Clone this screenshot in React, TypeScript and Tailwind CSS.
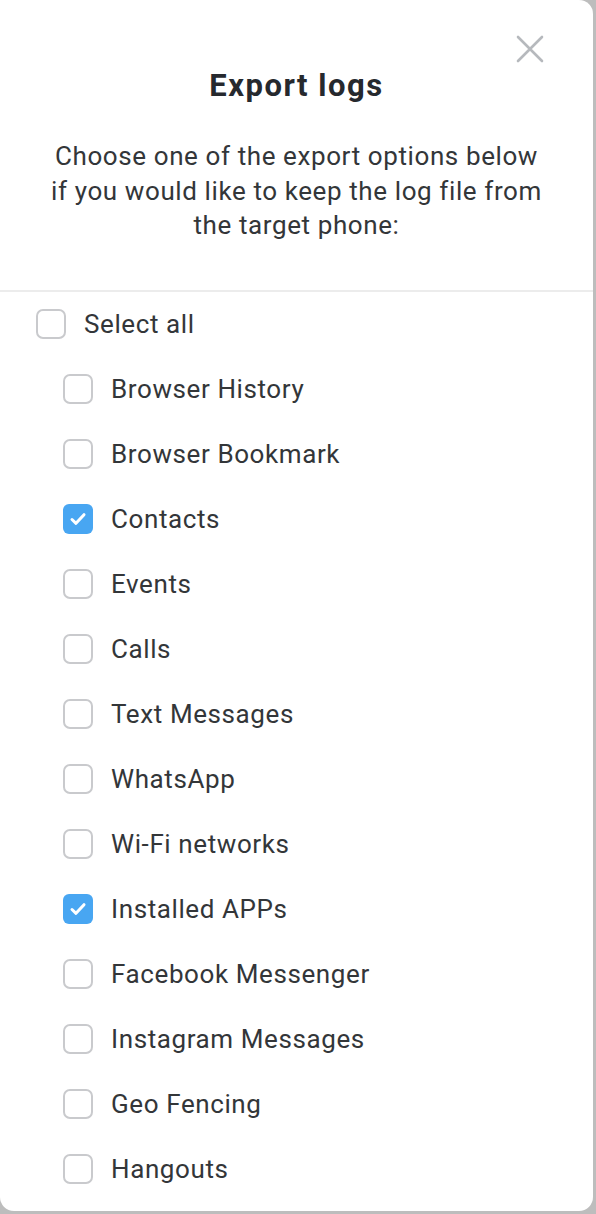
import { useState } from "react";

const items = [
  { label: "Browser History", checked: false },
  { label: "Browser Bookmark", checked: false },
  { label: "Contacts", checked: true },
  { label: "Events", checked: false },
  { label: "Calls", checked: false },
  { label: "Text Messages", checked: false },
  { label: "WhatsApp", checked: false },
  { label: "Wi-Fi networks", checked: false },
  { label: "Installed APPs", checked: true },
  { label: "Facebook Messenger", checked: false },
  { label: "Instagram Messages", checked: false },
  { label: "Geo Fencing", checked: false },
  { label: "Hangouts", checked: false },
];

const Box = ({ checked }: { checked: boolean }) => {
  if (checked) {
    return (
      <span className="flex h-[30px] w-[30px] shrink-0 items-center justify-center rounded-[6px] bg-[#48a6f2]">
        <svg width="20" height="20" viewBox="0 0 20 20" fill="none">
          <path
            d="M4 10.5l4 3.8 8-8.6"
            stroke="white"
            strokeWidth="3"
            strokeLinecap="round"
            strokeLinejoin="round"
          />
        </svg>
      </span>
    );
  }
  return (
    <span className="block h-[30px] w-[30px] shrink-0 rounded-[7px] border-[2.5px] border-[#c9cacd] bg-white" />
  );
};

const Row = ({
  label,
  checked,
  indent,
}: {
  label: string;
  checked: boolean;
  indent?: boolean;
}) => (
  <label
    className={
      "flex h-[65px] items-center gap-[18px] " +
      (indent ? "pl-[63px]" : "pl-[36px]")
    }
  >
    <Box checked={checked} />
    <span className="text-[26px] text-[#333639] tracking-[0.6px]">{label}</span>
  </label>
);

export default function App() {
  const [list] = useState(items);

  return (
    <div
      className="h-[1214px] w-[596px] overflow-hidden bg-[#bdbdbd]"
      style={{ fontFamily: "Roboto, 'Liberation Sans', sans-serif" }}
    >
      <div className="relative h-[1211px] w-[593px] rounded-tr-[14px] rounded-b-[14px] bg-white">
        <button className="absolute right-[49px] top-[35px] text-[#b6b9bd]">
          <svg width="28" height="28" viewBox="0 0 28 28" fill="none">
            <path
              d="M2 2l24 24M26 2L2 26"
              stroke="currentColor"
              strokeWidth="2.6"
              strokeLinecap="round"
            />
          </svg>
        </button>

        <div className="flex flex-col items-center px-6 pt-[68px] pb-[47px] text-center">
          <h1 className="text-[31px] font-bold leading-[36px] tracking-[1.5px] text-[#26292e]">
            Export logs
          </h1>
          <p className="mt-[35px] whitespace-nowrap text-[26px] leading-[34.5px] text-[#333639] tracking-[0.6px]">
            Choose one of the export options below
            <br />
            if you would like to keep the log file from
            <br />
            the target phone:
          </p>
        </div>

        <div className="h-[2px] bg-[#ececec]" />

        <div className="flex flex-col">
          <Row label="Select all" checked={false} />
          {list.map((it) => (
            <Row key={it.label} label={it.label} checked={it.checked} indent />
          ))}
        </div>
      </div>
    </div>
  );
}
